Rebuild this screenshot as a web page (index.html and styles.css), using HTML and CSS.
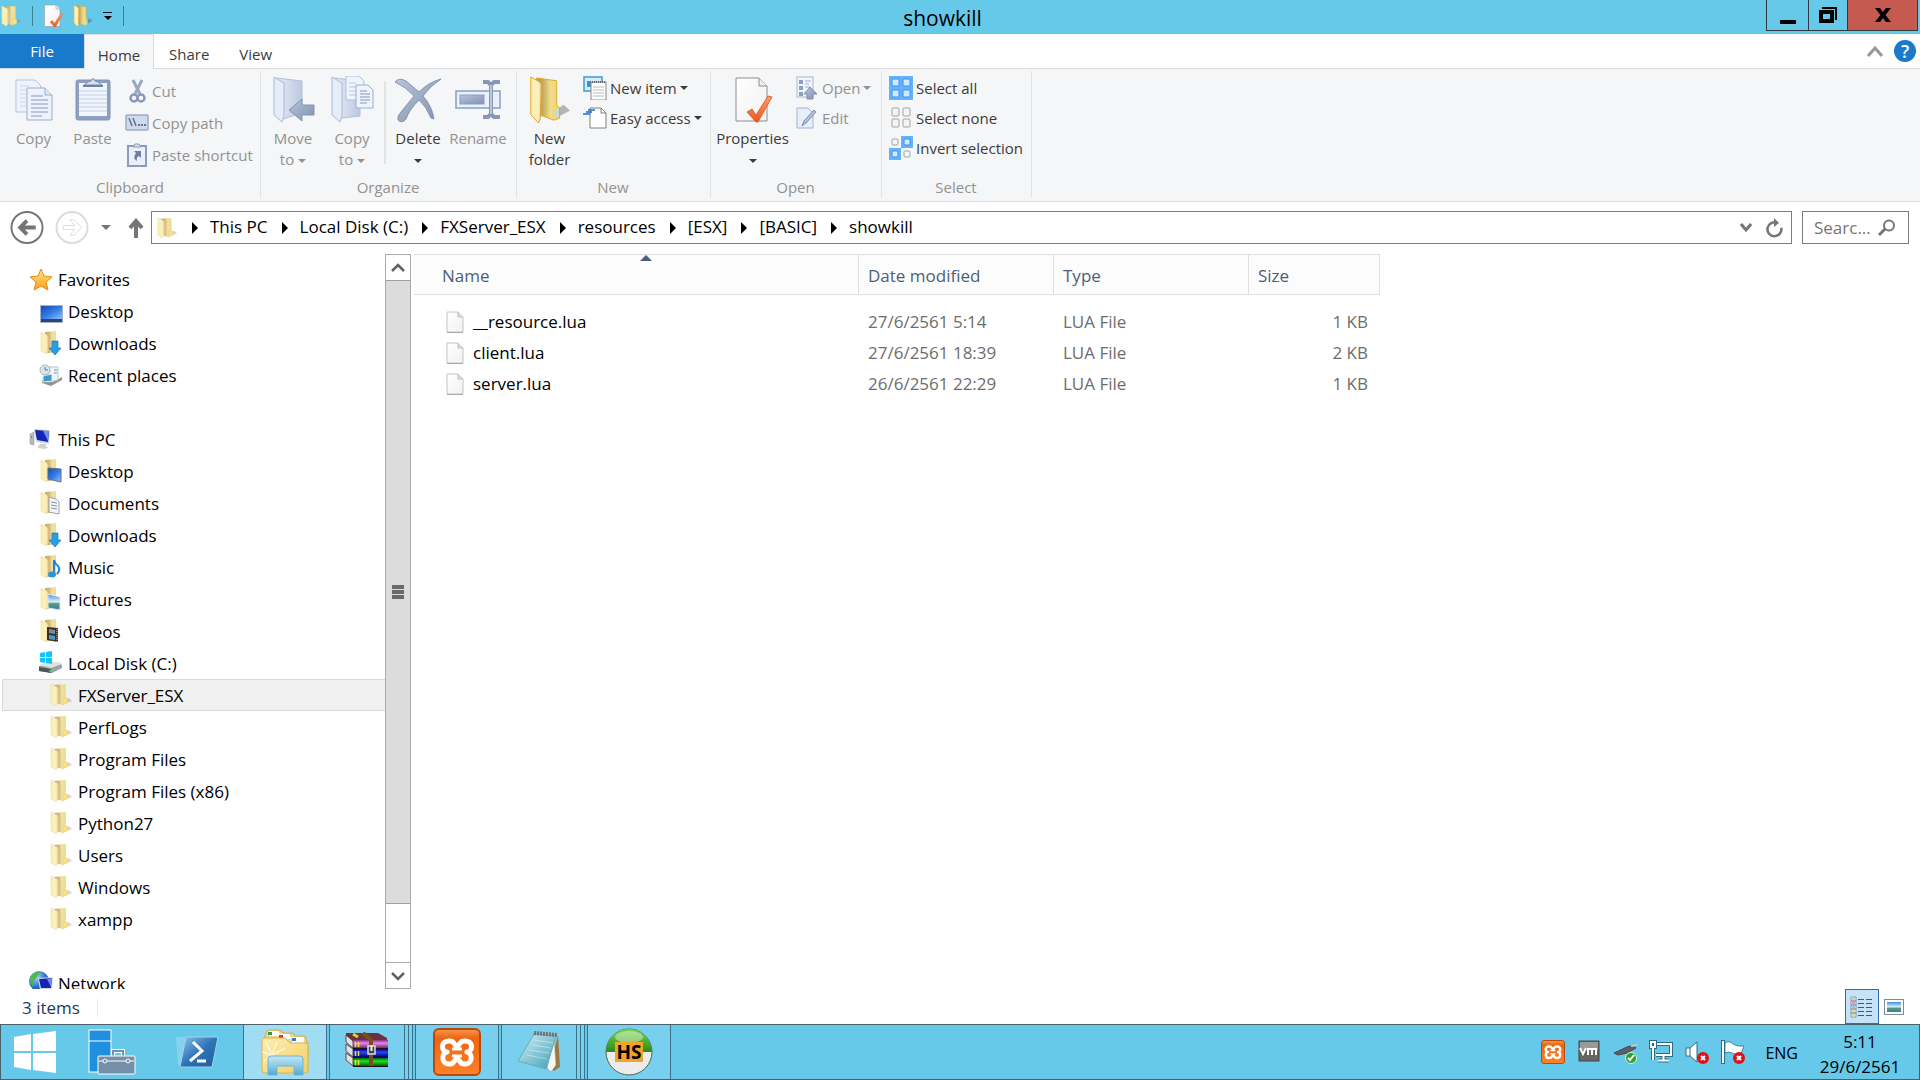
FILE: index.html
```html
<!DOCTYPE html>
<html lang="en">
<head>
<meta charset="utf-8">
<title>showkill</title>
<link rel="stylesheet" href="styles.css">
</head>
<body>
<svg class="defs" width="0" height="0" aria-hidden="true">
  <defs>
    <linearGradient id="gFront" x1="0" x2="1"><stop offset="0" stop-color="#fcefb0"/><stop offset=".7" stop-color="#fbf0c0"/><stop offset="1" stop-color="#ead28a"/></linearGradient>
    <linearGradient id="gBack" x1="0" x2="1"><stop offset="0" stop-color="#b9974a"/><stop offset=".3" stop-color="#c9ad60"/><stop offset=".6" stop-color="#efdc8e"/><stop offset="1" stop-color="#f0d566"/></linearGradient>
    <linearGradient id="gBackPale" x1="0" x2="1"><stop offset="0" stop-color="#c5a868"/><stop offset=".35" stop-color="#d0b87c"/><stop offset=".6" stop-color="#f0e0a4"/><stop offset="1" stop-color="#f1da80"/></linearGradient>
    <linearGradient id="gBlueFold" x1="0" x2="1"><stop offset="0" stop-color="#e6ecf8"/><stop offset="1" stop-color="#bcc8de"/></linearGradient>
    <linearGradient id="gSteel" x1="0" y1="0" x2="1" y2="1"><stop offset="0" stop-color="#bac5d8"/><stop offset="1" stop-color="#7f91b1"/></linearGradient>
    <linearGradient id="gScreen" x1="0" y1="0" x2="1" y2="1"><stop offset="0" stop-color="#1d49ad"/><stop offset=".5" stop-color="#2f7be6"/><stop offset="1" stop-color="#8fc0fb"/></linearGradient>
    <linearGradient id="gStar" x1="0" y1="0" x2="0" y2="1"><stop offset="0" stop-color="#ffe680"/><stop offset="1" stop-color="#ff9d1e"/></linearGradient>
    <linearGradient id="gCheck" x1="0" y1="0" x2="0" y2="1"><stop offset="0" stop-color="#f8a070"/><stop offset="1" stop-color="#e8571d"/></linearGradient>
    <linearGradient id="gPage" x1="0" y1="0" x2="1" y2="1"><stop offset="0" stop-color="#ffffff"/><stop offset="1" stop-color="#f1f1f1"/></linearGradient>
    <linearGradient id="gPs" x1="0" y1="0" x2="1" y2="1"><stop offset="0" stop-color="#8cc4ea"/><stop offset=".5" stop-color="#2f74b8"/><stop offset="1" stop-color="#1d5c9e"/></linearGradient>
    <linearGradient id="gNote" x1="0" y1="0" x2="1" y2="1"><stop offset="0" stop-color="#d3f0f6"/><stop offset="1" stop-color="#3f9fb8"/></linearGradient>
    <linearGradient id="gSky" x1="0" y1="0" x2="0" y2="1"><stop offset="0" stop-color="#3f8fdc"/><stop offset=".5" stop-color="#dff2fb"/><stop offset=".6" stop-color="#5f9a74"/><stop offset="1" stop-color="#357abc"/></linearGradient>
    <linearGradient id="gManila" x1="0" y1="0" x2="1" y2="1"><stop offset="0" stop-color="#fbeeb4"/><stop offset="1" stop-color="#f3cf62"/></linearGradient>
    <linearGradient id="gStand" x1="0" y1="0" x2="0" y2="1"><stop offset="0" stop-color="#c3e6f3"/><stop offset=".5" stop-color="#8fcbe6"/><stop offset="1" stop-color="#4fa7d6"/></linearGradient>
    <radialGradient id="gGlobe" cx=".35" cy=".3" r=".8"><stop offset="0" stop-color="#a8d8ff"/><stop offset=".6" stop-color="#2a71cf"/><stop offset="1" stop-color="#0a3a8c"/></radialGradient>
    <linearGradient id="gOrange" x1="0" y1="0" x2="0" y2="1"><stop offset="0" stop-color="#f59a52"/><stop offset=".2" stop-color="#ee6511"/><stop offset="1" stop-color="#ff8128"/></linearGradient>
    <linearGradient id="gGreen" x1="0" y1="0" x2="0" y2="1"><stop offset="0" stop-color="#79d84a"/><stop offset="1" stop-color="#2c8a1c"/></linearGradient>
    <linearGradient id="gPurple" x1="0" y1="0" x2="0" y2="1"><stop offset="0" stop-color="#8c2f84"/><stop offset=".4" stop-color="#e58be0"/><stop offset="1" stop-color="#7a2272"/></linearGradient>
    <linearGradient id="gBlue" x1="0" y1="0" x2="0" y2="1"><stop offset="0" stop-color="#00008c"/><stop offset=".4" stop-color="#2b45f5"/><stop offset="1" stop-color="#000070"/></linearGradient>
    <linearGradient id="gLime" x1="0" y1="0" x2="0" y2="1"><stop offset="0" stop-color="#006e00"/><stop offset=".4" stop-color="#1fe01f"/><stop offset="1" stop-color="#006000"/></linearGradient>
  </defs>
  <symbol id="folder" viewBox="0 0 24 24">
    <path d="M12 22L23 18L20 15L15 17Z" fill="#777" opacity=".3"/>
    <path d="M5 2L16 1L17 2V15L18 15.500V20L14 22L7 20Z" fill="url(#gBackPale)"/>
    <path d="M2 1L8 4L9 6V20L7 23L2 20Z" fill="url(#gFront)" stroke="#ecd795" stroke-width=".5"/>
    <path d="M14 15.500H18V20L14 21.500Z" fill="#f7e48a" stroke="#e8cc6a" stroke-width=".5"/>
  </symbol>
  <symbol id="folder-plain" viewBox="0 0 24 24">
    <path d="M6 1L17 0V17L18 20L14 22H7Z" fill="url(#gBackPale)"/>
    <path d="M2 1L8 4L9 6V20L7 23L2 20Z" fill="url(#gFront)" stroke="#ecd795" stroke-width=".5"/>
  </symbol>
  <symbol id="down" viewBox="0 0 24 24"><path d="M13 10H19V17H22L16 24L10 17H13Z" fill="#2a9fe0" stroke="#1577b5" stroke-width=".7"/></symbol>
  <symbol id="caret" viewBox="0 0 8 4"><path d="M0 0H8L4 4Z" fill="currentColor"/></symbol>
  <symbol id="arrow-r" viewBox="0 0 6 12"><path d="M0 0L6 6L0 12Z" fill="currentColor"/></symbol>
  <symbol id="xampp" viewBox="0 0 48 48">
    <rect x="1" y="1" width="46" height="46" rx="5" fill="url(#gOrange)" stroke="#b9480d" stroke-width="2"/>
    <path d="M17 13C7 12 8 24 14 24C8 25 8 37 17 36C22 36 21 31 24 31C27 31 26 36 31 36C40 37 40 25 34 24C40 24 41 12 31 13C26 13 27 18 24 18C21 18 22 13 17 13Z" fill="none" stroke="#fff" stroke-width="5" stroke-linejoin="round"/>
    <path d="M19 21H29M19 28H29" stroke="#fff" stroke-width="3"/>
  </symbol>
  <symbol id="file" viewBox="0 0 18 22">
    <path d="M1 1H12L17 6V21H1Z" fill="url(#gPage)" stroke="#c4c4c4"/><path d="M12 1V6H17" fill="#ddd" stroke="#bdbdbd"/><path d="M1 21.500H17" stroke="#aaa"/>
  </symbol>
  <symbol id="props" viewBox="0 0 40 48">
    <path d="M3 2H26L34 10V45H3Z" fill="url(#gPage)" stroke="#8c8c8c"/><path d="M26 2V10H34" fill="#eee" stroke="#8c8c8c"/>
    <path d="M14 36L19 33L23 39L35 20L39 21L25 46H23Z" fill="url(#gCheck)" stroke="#e0531c" stroke-width=".8"/>
  </symbol>
  <symbol id="newfolder" viewBox="0 0 44 50">
    <path d="M24 46L43 36L36 30L28 36Z" fill="#555" opacity=".4"/>
    <path d="M8 2L29 5V31L32 33V44L26 46L10 40Z" fill="url(#gBack)" stroke="#e0a91e"/>
    <path d="M2 1L11 6L13 9L12 44L10 49L2 40Z" fill="url(#gFront)" stroke="#d9a227"/>
    <path d="M28 35H31V42L28 44Z" fill="#b8dcff"/>
  </symbol>
  <symbol id="redx" viewBox="0 0 12 12"><circle cx="6" cy="6" r="6" fill="#d9151b"/><path d="M4 4L8 8M8 4L4 8" stroke="#fff" stroke-width="2"/></symbol>
</svg>

<header class="titlebar">
  <div class="quick">
    <svg width="22" height="24"><use href="#folder"/></svg>
    <span class="qsep"></span>
    <button aria-label="Properties"><svg width="20" height="24"><use href="#props"/></svg></button>
    <button aria-label="New folder"><svg width="20" height="24"><use href="#newfolder"/></svg></button>
    <button aria-label="Customize toolbar"><svg width="10" height="8" viewBox="0 0 10 8"><path d="M0 0H9V1H0ZM1 4H9L5 8Z"/></svg></button>
    <span class="qsep"></span>
  </div>
  <h1 class="title">showkill</h1>
  <div class="winbtns">
    <button class="min" aria-label="Minimize"><svg width="16" height="14" viewBox="0 0 16 14"><path d="M0 10H16V14H0Z"/></svg></button>
    <button class="max" aria-label="Restore"><svg width="18" height="16" viewBox="0 0 18 16"><path d="M3 0H18V13H16V2H3ZM0 3H15V16H0ZM4 7V12H11V7Z" fill-rule="evenodd"/></svg></button>
    <button class="close" aria-label="Close"><svg width="16" height="14" viewBox="0 0 16 14"><path d="M0 0H5L8 4L11 0H16L10.500 7L16 14H11L8 10L5 14H0L5.500 7Z"/></svg></button>
  </div>
</header>

<nav class="tabs" aria-label="Ribbon tabs">
  <button class="tab file">File</button>
  <button class="tab home">Home</button>
  <button class="tab">Share</button>
  <button class="tab">View</button>
  <span class="grow"></span>
  <button class="plain" aria-label="Collapse ribbon"><svg width="16" height="12" viewBox="0 0 16 12"><path d="M1 11L8 3L15 11" fill="none" stroke="#999" stroke-width="3"/></svg></button>
  <button class="help" aria-label="Help">?</button>
</nav>

<section class="ribbon" aria-label="Home ribbon">
  <div class="group g-clip">
    <div class="tools">
      <button class="big off"><svg width="38" height="48" viewBox="0 0 38 48"><g stroke="#b5c3dc" fill="#edf3fd"><path d="M1 4H20L26 10V36H1Z"/><path d="M12 12H30L37 19V44H12Z" stroke="#9badcb"/></g><path d="M30 12V19H37" fill="#dde7f7" stroke="#9badcb"/><path d="M5 10H14M5 14H11M5 18H11M5 22H11M5 26H11M5 30H11" stroke="#cbd6e8"/><path d="M16 20H28M16 24H33M16 28H33M16 32H33M16 36H33M16 40H27" stroke="#8497b8"/></svg><span>Copy</span></button>
      <button class="big off"><svg width="38" height="48" viewBox="0 0 38 48"><rect x="2" y="4" width="34" height="40" rx="2" fill="#8ea0c0" stroke="#8496b5"/><rect x="5" y="7" width="28" height="33" fill="#f0f5fe"/><path d="M5 15H33M5 19H33M5 23H33M5 27H33M5 31H33M5 35H33" stroke="#c3cfe3"/><path d="M10 9L14 6L17 5Q19 0 21 5L24 6L28 9Z" fill="#d7e0ee" stroke="#7c8eae"/><path d="M9 10H29" stroke="#71829f" stroke-width="2"/></svg><span>Paste</span></button>
      <div class="list roomy">
        <button class="small off"><svg width="24" height="24" viewBox="0 0 24 24"><path d="M8 1L15 15M17 1L10 15" stroke="#98a8c4" stroke-width="3"/><circle cx="9" cy="19" r="3.500" fill="none" stroke="#8799ba" stroke-width="2.500"/><circle cx="16" cy="19" r="3.500" fill="none" stroke="#8799ba" stroke-width="2.500"/></svg>Cut</button>
        <button class="small off"><svg width="24" height="24" viewBox="0 0 24 24"><rect x="1" y="4" width="22" height="15" rx="1" fill="#cfdaec" stroke="#9babc8" stroke-width="1.500"/><path d="M4 7L7 15M8 7L11 15" stroke="#5f7396" stroke-width="1.500"/><path d="M13 14H15M16 14H18M19 14H21" stroke="#5f7396" stroke-width="2"/></svg>Copy path</button>
        <button class="small off"><svg width="24" height="24" viewBox="0 0 24 24"><rect x="3" y="3" width="18" height="20" fill="#e9f0fc" stroke="#8b9dbe" stroke-width="2"/><path d="M8 4L10 1H14L16 4Z" fill="#d7e0ee" stroke="#8b9dbe"/><path d="M9 8H16V15L14 13Q11 14 12 18Q7 15 11 10Z" fill="#6c80a5"/></svg>Paste shortcut</button>
      </div>
    </div>
    <div class="caption">Clipboard</div>
  </div>
  <div class="group g-org">
    <div class="tools">
      <button class="big off"><svg width="44" height="48" viewBox="0 0 44 48"><path d="M5 2L31 5V37L12 43Z" fill="url(#gBlueFold)" stroke="#b3c0d8"/><path d="M3 1L13 7V40L11 46L3 39Z" fill="#e5edf9" stroke="#aab9d4"/><path d="M18 34L31 23V29H43V39H31V45Z" fill="url(#gSteel)" stroke="#8294b3"/></svg><span>Move<br>to <svg class="cr" width="8" height="4"><use href="#caret"/></svg></span></button>
      <button class="big off"><svg width="44" height="48" viewBox="0 0 44 48"><path d="M5 2L30 5V40L12 42Z" fill="url(#gBlueFold)" stroke="#b3c0d8"/><path d="M2 1L12 7V40L10 46L2 39Z" fill="#e5edf9" stroke="#aab9d4"/><path d="M16 0H29L34 5V24H16Z" fill="#eef4fe" stroke="#b2c0d9"/><path d="M19 7H26M19 11H26M19 15H26M19 19H26" stroke="#bac7dd"/><path d="M26 9H38L43 14V32H26Z" fill="#eef4fe" stroke="#9badcb"/><path d="M30 15H37M30 18H40M30 21H40M30 24H40M30 27H37" stroke="#8295b7"/></svg><span>Copy<br>to <svg class="cr" width="8" height="4"><use href="#caret"/></svg></span></button>
      <span class="tsep"></span>
      <button class="big"><svg width="48" height="48" viewBox="0 0 48 48"><path d="M1 6Q5 1 12 5L25 16Q35 6 47 3Q36 10 29 20Q38 30 40 43L37 42Q32 30 25 24Q15 34 12 43Q8 48 4 44Q3 40 7 36L20 20Q12 11 1 6Z" fill="url(#gSteel)" stroke="#8395b4"/></svg><span>Delete<br><svg class="cr" width="8" height="4"><use href="#caret"/></svg></span></button>
      <button class="big off"><svg width="46" height="48" viewBox="0 0 46 48"><rect x="1" y="15" width="44" height="17" fill="#eaf1fe" stroke="#8b9dbe" stroke-width="1.500"/><rect x="5" y="19" width="24" height="9" fill="url(#gSteel)" stroke="#8b9dbe"/><path d="M28 6H33L36 9L39 6H45M28 41H33L36 38L39 41H45M36 8V39" fill="none" stroke="#8698b6" stroke-width="4"/><path d="M36 9V38" stroke="#b9c6db" stroke-width="2"/></svg><span>Rename</span></button>
    </div>
    <div class="caption">Organize</div>
  </div>
  <div class="group g-new">
    <div class="tools">
      <button class="big"><svg width="44" height="48"><use href="#newfolder"/></svg><span>New<br>folder</span></button>
      <div class="list">
        <button class="small"><svg width="24" height="24" viewBox="0 0 24 24"><rect x="1" y="1" width="18" height="14" fill="#d5ecfa" stroke="#3f9bd4" stroke-width="1.500"/><path d="M4 5H8V11H4Z" fill="#3f8fca"/><rect x="8" y="6" width="15" height="18" fill="#fff" stroke="#868686"/><path d="M9 6H23" stroke="#666" stroke-width="2" stroke-dasharray="1 1"/><path d="M10 11H21M10 14H21M10 17H21M10 20H21" stroke="#b5bcc4"/></svg>New item <svg class="cr" width="8" height="4"><use href="#caret"/></svg></button>
        <button class="small"><svg width="24" height="24" viewBox="0 0 24 24"><path d="M7 2H18L23 7V22H7Z" fill="#fff" stroke="#808080"/><path d="M18 2V7H23" fill="none" stroke="#808080"/><path d="M5 4H12M3 6H9M0 8H7" stroke="#1d6fd6" stroke-width="1.500"/></svg>Easy access <svg class="cr" width="8" height="4"><use href="#caret"/></svg></button>
      </div>
    </div>
    <div class="caption">New</div>
  </div>
  <div class="group g-open">
    <div class="tools">
      <button class="big wide"><svg width="40" height="48"><use href="#props"/></svg><span>Properties<br><svg class="cr" width="8" height="4"><use href="#caret"/></svg></span></button>
      <div class="list">
        <button class="small off"><svg width="24" height="24" viewBox="0 0 24 24"><rect x="2" y="1" width="16" height="20" fill="#f2f6fd" stroke="#a7b6d0"/><path d="M4 4H8V8H4ZM4 10H8V14H4ZM4 16H8V20H4Z" fill="#8d9fbf"/><path d="M10 5H16M10 8H14M10 11H15" stroke="#9badcb"/><path d="M15 11L22 18H18V23H12V18H9Z" fill="url(#gSteel)" stroke="#7f91b0"/></svg>Open <svg class="cr" width="8" height="4"><use href="#caret"/></svg></button>
        <button class="small off"><svg width="24" height="24" viewBox="0 0 24 24"><path d="M2 2H13L18 7V22H2Z" fill="#e6effc" stroke="#a2b2cf"/><path d="M7 20L9 15L19 4L21 6L11 17Z" fill="#b5c3da" stroke="#7c8eae"/></svg>Edit</button>
      </div>
    </div>
    <div class="caption">Open</div>
  </div>
  <div class="group g-sel">
    <div class="tools">
      <div class="list">
        <button class="small"><svg width="24" height="24" viewBox="0 0 24 24"><path d="M0 0H24V24H0Z" fill="#62b2ff"/><g fill="#cfeaff" stroke="#3d93e6"><rect x="3" y="3" width="7" height="7" rx="1"/><rect x="14" y="3" width="7" height="7" rx="1"/><rect x="3" y="14" width="7" height="7" rx="1"/><rect x="14" y="14" width="7" height="7" rx="1"/></g></svg>Select all</button>
        <button class="small"><svg width="24" height="24" viewBox="0 0 24 24"><g fill="#f4f4f4" stroke="#a3a3a3"><rect x="3" y="2" width="7" height="8" rx="1"/><rect x="14" y="2" width="7" height="8" rx="1"/><rect x="3" y="13" width="7" height="8" rx="1"/><rect x="14" y="13" width="7" height="8" rx="1"/></g></svg>Select none</button>
        <button class="small"><svg width="24" height="24" viewBox="0 0 24 24"><path d="M12 0H24V12H12ZM0 12H12V24H0Z" fill="#62b2ff"/><g fill="#f4f4f4" stroke="#a3a3a3"><rect x="3" y="3" width="6" height="6" rx="1"/><rect x="15" y="15" width="6" height="6" rx="1"/></g><g fill="#cfeaff" stroke="#3d93e6"><rect x="15" y="3" width="6" height="6" rx="1"/><rect x="3" y="15" width="6" height="6" rx="1"/></g></svg>Invert selection</button>
      </div>
    </div>
    <div class="caption">Select</div>
  </div>
</section>

<div class="addressrow">
  <button class="plain" aria-label="Back"><svg width="34" height="33" viewBox="0 0 34 34"><circle cx="17" cy="17" r="16" fill="none" stroke="#757575" stroke-width="2"/><path d="M26 17H11M17 10L10 17L17 24" fill="none" stroke="#757575" stroke-width="4"/></svg></button>
  <button class="plain fwd" aria-label="Forward"><svg width="34" height="33" viewBox="0 0 34 34"><circle cx="17" cy="17" r="16" fill="none" stroke="#dcdcdc" stroke-width="2"/><path d="M8 15H20L15 9H19L27 17L19 25H15L20 19H8Z" fill="none" stroke="#dcdcdc"/></svg></button>
  <button class="plain hist" aria-label="Recent locations"><svg width="10" height="5"><use href="#caret"/></svg></button>
  <button class="plain up" aria-label="Up"><svg width="16" height="20" viewBox="0 0 16 20"><path d="M8 20V3M2 10L8 3L14 10" fill="none" stroke="#757575" stroke-width="4"/></svg></button>
  <div class="address">
    <svg width="22" height="24"><use href="#folder"/></svg>
    <nav class="crumbs" aria-label="Path">
      <svg width="6" height="12"><use href="#arrow-r"/></svg><a href="#">This PC</a>
      <svg width="6" height="12"><use href="#arrow-r"/></svg><a href="#">Local Disk (C:)</a>
      <svg width="6" height="12"><use href="#arrow-r"/></svg><a href="#">FXServer_ESX</a>
      <svg width="6" height="12"><use href="#arrow-r"/></svg><a href="#">resources</a>
      <svg width="6" height="12"><use href="#arrow-r"/></svg><a href="#">[ESX]</a>
      <svg width="6" height="12"><use href="#arrow-r"/></svg><a href="#">[BASIC]</a>
      <svg width="6" height="12"><use href="#arrow-r"/></svg><a href="#">showkill</a>
    </nav>
    <button class="plain" aria-label="Previous locations"><svg width="12" height="10" viewBox="0 0 12 10"><path d="M1 1L6 7L11 1" fill="none" stroke="#757575" stroke-width="3"/></svg></button>
    <button class="plain" aria-label="Refresh"><svg width="18" height="20" viewBox="0 0 18 20"><path d="M14 7A7 7 0 1 1 8 4.500" fill="none" stroke="#757575" stroke-width="2.500" transform="rotate(28 9 11)"/><path d="M8 0L13 5L8 9Z" fill="#757575"/></svg></button>
  </div>
  <label class="search"><input type="text" aria-label="Search showkill" placeholder="Searc..."><svg width="18" height="18" viewBox="0 0 18 18"><circle cx="11" cy="6.500" r="5" fill="none" stroke="#757575" stroke-width="2"/><path d="M7 10L1 16" stroke="#757575" stroke-width="3"/></svg></label>
</div>

<main class="main">
  <nav class="tree" aria-label="Navigation pane">
    <a class="l0" href="#"><svg width="24" height="24" viewBox="0 0 24 24"><path d="M12 2L15 9L23 10L17 15L19 23L12 19L5 23L7 15L1 10L9 9Z" fill="url(#gStar)" stroke="#e98a17"/></svg>Favorites</a>
    <a class="l1" href="#"><svg width="24" height="24" viewBox="0 0 24 24"><path d="M1 6H24V24H1Z" fill="#9db4d4"/><path d="M2 7H23V20H2Z" fill="url(#gScreen)"/><path d="M2 20H23V23H2Z" fill="#2f4468"/></svg>Desktop</a>
    <a class="l1" href="#"><svg width="24" height="24" viewBox="0 0 24 24"><use href="#folder-plain"/><use href="#down"/></svg>Downloads</a>
    <a class="l1" href="#"><svg width="24" height="24" viewBox="0 0 24 24"><path d="M3 20L12 23L23 17V14L14 19L3 17Z" fill="#8d9496"/><path d="M9 4H19V17L9 19Z" fill="#f2f5f7" stroke="#b9c3c9"/><path d="M4 13L13 11V18L4 19Z" fill="#3c9bc9" stroke="#dfe9ee"/><path d="M15 7H18M15 10H18" stroke="#5c8fb8"/><circle cx="6" cy="7" r="5" fill="#d8e6ee" stroke="#9fb3bf"/><path d="M6 4V7H9" fill="none" stroke="#5d7280"/></svg>Recent places</a>
    <span class="gap"></span>
    <a class="l0" href="#"><svg width="24" height="24" viewBox="0 0 24 24"><path d="M1 7L5 5V18L1 17Z" fill="#b4bac1" stroke="#8a9199" stroke-width=".5"/><path d="M2 9H3V11H2Z" fill="#2cb82c"/><path d="M11 17H17V20H20L16 22L8 21Z" fill="#cfd3d8"/><path d="M5 2L21 3L20 17L7 15Z" fill="#d4d8de"/><path d="M6 3L20 4L19 15L8 13Z" fill="#1523b4"/><path d="M14 4L20 4L19 14Z" fill="#6f8cf0"/></svg>This PC</a>
    <a class="l1" href="#"><svg width="24" height="24" viewBox="0 0 24 24"><use href="#folder-plain"/><path d="M9 9L22 10V23L9 20Z" fill="url(#gScreen)" stroke="#5b6f8e"/></svg>Desktop</a>
    <a class="l1" href="#"><svg width="24" height="24" viewBox="0 0 24 24"><use href="#folder-plain"/><path d="M10 6L17 8L20 11V23L10 21Z" fill="#f6f7f9" stroke="#9ea3a8"/><path d="M12 11L18 12M12 14L18 15M12 17L18 18" stroke="#7f93a8"/></svg>Documents</a>
    <a class="l1" href="#"><svg width="24" height="24" viewBox="0 0 24 24"><use href="#folder-plain"/><use href="#down"/></svg>Downloads</a>
    <a class="l1" href="#"><svg width="24" height="24" viewBox="0 0 24 24"><use href="#folder-plain"/><path d="M15 5Q16 9 19 11Q22 15 18 19" fill="none" stroke="#1f86cf" stroke-width="2"/><path d="M15 5V19" stroke="#1f86cf" stroke-width="2"/><ellipse cx="13" cy="19.500" rx="4" ry="3" fill="#2a93da"/></svg>Music</a>
    <a class="l1" href="#"><svg width="24" height="24" viewBox="0 0 24 24"><use href="#folder-plain"/><path d="M9 7L21 10V23L9 21Z" fill="url(#gSky)" stroke="#e8eef2"/></svg>Pictures</a>
    <a class="l1" href="#"><svg width="24" height="24" viewBox="0 0 24 24"><use href="#folder-plain"/><path d="M8 8L19 9V23L8 21Z" fill="#3c3026"/><path d="M10 10L16 11V15L10 14ZM10 16L16 17V21L10 20Z" fill="#4a9bd0"/><path d="M11 12L14 11V14ZM12 18L15 18V20Z" fill="#d8692a"/><path d="M18 10V23" stroke="#d8d8d8" stroke-dasharray="1 1"/></svg>Videos</a>
    <a class="l1" href="#"><svg width="24" height="24" viewBox="0 0 24 24"><path d="M0 15L10 12H20L23 14V17L13 22L0 20Z" fill="#9da2a5"/><path d="M0 14L12 17L23 13L20 11H9Z" fill="#dfe2e3"/><path d="M0 16L12 18V22L0 20Z" fill="#4b5659"/><path d="M10 19H12V21H10Z" fill="#35d435"/><path d="M1 2L6 1V6H1ZM7 1L13 0V6H7ZM1 7H6V12L1 11ZM7 7H13V13L7 12Z" fill="#12c4fb"/></svg>Local Disk (C:)</a>
    <a class="l2 sel" href="#"><svg width="24" height="24"><use href="#folder"/></svg>FXServer_ESX</a>
    <a class="l2" href="#"><svg width="24" height="24"><use href="#folder"/></svg>PerfLogs</a>
    <a class="l2" href="#"><svg width="24" height="24"><use href="#folder"/></svg>Program Files</a>
    <a class="l2" href="#"><svg width="24" height="24"><use href="#folder"/></svg>Program Files (x86)</a>
    <a class="l2" href="#"><svg width="24" height="24"><use href="#folder"/></svg>Python27</a>
    <a class="l2" href="#"><svg width="24" height="24"><use href="#folder"/></svg>Users</a>
    <a class="l2" href="#"><svg width="24" height="24"><use href="#folder"/></svg>Windows</a>
    <a class="l2" href="#"><svg width="24" height="24"><use href="#folder"/></svg>xampp</a>
    <span class="gap"></span>
    <a class="l0" href="#"><svg width="24" height="24" viewBox="0 0 24 24"><circle cx="10" cy="10" r="10" fill="url(#gGlobe)"/><path d="M2 5Q7 -1 11 1L8 6L4 11L5 16Q-1 11 2 5Z" fill="#4fb84a"/><path d="M9 7L24 6L23 18L11 19Z" fill="#d4d8de"/><path d="M10 8L23 7L22 17L12 17Z" fill="#1523b4"/><path d="M18 8L23 7L22 16Z" fill="#6f8cf0"/></svg>Network</a>
  </nav>
  <div class="scrollbar">
    <button aria-label="Scroll up"><svg width="14" height="10" viewBox="0 0 14 10"><path d="M1 8L7 2L13 8" fill="none" stroke="#606060" stroke-width="2.500"/></svg></button>
    <div class="track"><div class="thumb"><i></i><i></i><i></i></div></div>
    <button aria-label="Scroll down"><svg width="14" height="10" viewBox="0 0 14 10"><path d="M1 2L7 8L13 2" fill="none" stroke="#606060" stroke-width="2.500"/></svg></button>
  </div>
  <div class="files">
    <table>
      <colgroup><col class="c-name"><col class="c-date"><col class="c-type"><col class="c-size"></colgroup>
      <thead><tr>
        <th class="sorted">Name<svg class="sort" width="12" height="6" viewBox="0 0 12 6"><path d="M0 6L6 0L12 6Z" fill="#4c607a"/></svg></th>
        <th>Date modified</th><th>Type</th><th>Size</th>
      </tr></thead>
      <tbody>
        <tr><td><span class="fname"><svg width="18" height="22"><use href="#file"/></svg>__resource.lua</span></td><td>27/6/2561 5:14</td><td>LUA File</td><td>1 KB</td></tr>
        <tr><td><span class="fname"><svg width="18" height="22"><use href="#file"/></svg>client.lua</span></td><td>27/6/2561 18:39</td><td>LUA File</td><td>2 KB</td></tr>
        <tr><td><span class="fname"><svg width="18" height="22"><use href="#file"/></svg>server.lua</span></td><td>26/6/2561 22:29</td><td>LUA File</td><td>1 KB</td></tr>
      </tbody>
    </table>
  </div>
</main>

<div class="status">
  <span class="count">3 items</span>
  <span class="grow"></span>
  <button class="view on" aria-label="Details view"><svg width="24" height="22" viewBox="0 0 24 22"><g fill="#fff" stroke="#8795a5"><path d="M1 1H6V5H1ZM1 5H6V9H1ZM1 9H6V13H1ZM1 13H6V17H1ZM1 17H6V21H1Z"/></g><path d="M2 3H5" stroke="#999"/><path d="M2 7H5" stroke="#d33"/><path d="M2 11H5" stroke="#38c"/><path d="M2 15H5M2 19H5" stroke="#bb3"/><path d="M8 3.500H14M16 3.500H22M8 7.500H14M16 7.500H22M8 11.500H14M16 11.500H22M8 15.500H14M16 15.500H22M8 19.500H14M16 19.500H22" stroke="#44586f"/></svg></button>
  <button class="view" aria-label="Large icons view"><svg width="20" height="18" viewBox="0 0 20 18"><rect x=".5" y="1.500" width="19" height="15" fill="#fff" stroke="#7e8ea0"/><rect x="3" y="4" width="14" height="10" fill="url(#gSky)"/></svg></button>
</div>

<footer class="taskbar">
  <button class="pin start" aria-label="Start"><svg width="44" height="44" viewBox="0 0 44 44"><path d="M1 7L18 4V21H1ZM20 4L43 1V21H20ZM1 23H18V40L1 37ZM20 23H43V43L20 40Z" fill="#fff"/></svg></button>
  <button class="pin srv" aria-label="Server Manager"><svg width="48" height="46" viewBox="0 0 48 46"><rect x="1" y="1" width="22" height="42" fill="#1f8fdf" stroke="#fff"/><path d="M1 12H23" stroke="#fff"/><path d="M25 27V22H35V27" fill="none" stroke="#fff" stroke-width="4"/><path d="M25 27V22H35V27" fill="none" stroke="#7390a8" stroke-width="2"/><rect x="10" y="27" width="37" height="18" rx="1" fill="#7390a8" stroke="#fff"/><path d="M11 32H46" stroke="#fff"/><circle cx="17" cy="32" r="2" fill="#7390a8" stroke="#fff"/><circle cx="40" cy="32" r="2" fill="#7390a8" stroke="#fff"/></svg></button>
  <button class="pin ps" aria-label="PowerShell"><svg width="44" height="34" viewBox="0 0 44 34"><path d="M0 2H12L8 30H2Z" fill="#fff" opacity=".2"/><path d="M10 2H42L36 32H4Z" fill="url(#gPs)" stroke="#a5cfea"/><path d="M17 7L26 16L14 26" fill="none" stroke="#fff" stroke-width="3"/><path d="M21 26H30" stroke="#fff" stroke-width="3"/></svg></button>
  <button class="task on" aria-label="File Explorer"><svg width="48" height="48" viewBox="0 0 48 48"><path d="M2 16L5 4Q6 2 8 2H18Q21 2 22 5H31Q33 5 34 8H43Q45 8 45 11L47 18V30H2Z" fill="#ecd58b" stroke="#d3ab50"/><path d="M8 3H17L20 8H8ZM19 6H28L31 11H19ZM31 9H43V15H31Z" fill="#fff"/><path d="M7 4H11V7H7Z" fill="#2e9d3c"/><path d="M18 7H22V10H18Z" fill="#dd3527"/><path d="M31 10H35V13H31Z" fill="#2a82ca"/><path d="M1 12Q1 10 3 10H24L29 15H45Q47 15 47 17V43Q47 45 45 45H4Q1 45 1 42Z" fill="url(#gManila)" stroke="#d9b150"/><path d="M11 27L5 14M11 27L1 24M11 27L16 14M11 27L24 20M11 27L2 34" stroke="#fff" stroke-width="1.500" opacity=".6"/><path d="M7 47V31Q7 28 10 28H39Q42 28 42 31V47H33V39Q33 38 32 38H17Q16 38 16 39V47Z" fill="url(#gStand)" stroke="#6bb5d8"/></svg></button>
  <button class="task stack" aria-label="WinRAR"><svg width="44" height="38" viewBox="0 0 44 38"><path d="M1 1H33L42 6V10H8L1 4Z" fill="#6b3042"/><path d="M8 8H43V16H8Z" fill="url(#gPurple)"/><path d="M8 17H43V25H8Z" fill="url(#gBlue)"/><path d="M8 26H43V34H8Z" fill="url(#gLime)"/><path d="M1 3L8 9V16L1 10ZM1 12L8 17V25L1 19ZM1 21L8 26V34L1 28Z" fill="#e4e0e0" stroke="#3a2a35" stroke-width=".8"/><path d="M8 16.500H43M8 25.500H43M8 34.500H43" stroke="#1a1020"/><path d="M8 2L13 5" stroke="#e0cf2a" stroke-width="3"/><path d="M10.500 10V15M13.500 10V15M10.500 19V24M13.500 19V24M10.500 28V33M13.500 28V33" stroke="#f3e03b" stroke-width="1.500"/><path d="M18 1L26 8V34" stroke="#7b4c1f" stroke-width="4" fill="none"/><rect x="23" y="14" width="7" height="8" fill="#444" stroke="#ddd" stroke-width="1.500"/><path d="M26.500 13V19" stroke="#eee" stroke-width="2"/></svg></button>
  <button class="task" aria-label="XAMPP"><svg width="48" height="48"><use href="#xampp"/></svg></button>
  <button class="task stack" aria-label="Notepad"><svg width="46" height="44" viewBox="0 0 46 44"><path d="M42 6L44 38L38 42L34 38Z" fill="#9a7a3e"/><path d="M38 6L40 36L35 43L31 39Z" fill="#f5f7f7" stroke="#888" stroke-width=".5"/><path d="M18 5L40 7L30 40L2 32Z" fill="url(#gNote)" stroke="#6ea9b8"/><path d="M18 11L37 14M16 16L35 19M13 21L33 24M11 26L31 30" stroke="#fff" opacity=".4"/><path d="M18 4L41 6" stroke="#75706a" stroke-width="4" stroke-dasharray="2 1"/></svg></button>
  <button class="task" aria-label="HeidiSQL"><svg width="48" height="48" viewBox="0 0 48 48"><ellipse cx="24" cy="24" rx="23" ry="23" fill="#ececec" stroke="#4c6a4c"/><path d="M1 24A23 23 0 0 1 47 24Z" fill="url(#gGreen)"/><ellipse cx="24" cy="9" rx="14" ry="6" fill="#fff" opacity=".4"/><rect x="10" y="14" width="28" height="20" fill="#f0a526"/><text x="24" y="31" class="hs" text-anchor="middle">HS</text></svg></button>
  <span class="grow"></span>
  <div class="tray">
    <svg width="24" height="24"><use href="#xampp"/></svg>
    <svg width="24" height="24" viewBox="0 0 24 24"><rect x="2" y="1" width="20" height="20" fill="#666" stroke="#444"/><path d="M3 2H21V10H3Z" fill="#999"/><path d="M3 8L6 14L9 8M11 15V9H15V15M15 9H19V15" fill="none" stroke="#fff" stroke-width="2"/></svg>
    <svg width="24" height="24" viewBox="0 0 24 24"><path d="M1 13L14 7L21 5L23 8L14 13L5 15Z" fill="#5b6064" stroke="#43484b"/><path d="M18 6L24 5" stroke="#ccc" stroke-width="2"/><circle cx="18" cy="18" r="5.500" fill="#2f9e32" stroke="#d9f0d9"/><path d="M15 18L17 20L21 15" fill="none" stroke="#fff" stroke-width="2"/></svg>
    <svg width="24" height="24" viewBox="0 0 24 24"><g fill="none" stroke="#2d6c85" stroke-width="4"><path d="M8 4H22V15H7M14.500 15V20M9 20.500H20M4 7V20"/><path d="M2 2H6V7H2Z"/></g><g fill="none" stroke="#fff" stroke-width="2"><path d="M8 4H22V15H7M14.500 15V20M9 20.500H20M4 7V20"/><path d="M2 2H6V7H2Z"/></g></svg>
    <svg width="24" height="24" viewBox="0 0 24 24"><path d="M1 8H5L12 2V22L5 16H1Z" fill="#fff" stroke="#2d6c85"/><path d="M5 8V16" stroke="#2d6c85"/><svg x="12" y="12" width="12" height="12"><use href="#redx"/></svg></svg>
    <svg width="24" height="24" viewBox="0 0 24 24"><path d="M4 3Q8 0 12 4Q17 7 23 6L20 14Q15 16 11 13Q7 11 4 13Z" fill="#fff" stroke="#2d6c85" stroke-width=".8"/><path d="M2 0V24" stroke="#2d6c85" stroke-width="4"/><path d="M2 1V23" stroke="#fff" stroke-width="2"/><svg x="12" y="12" width="12" height="12"><use href="#redx"/></svg></svg>
  </div>
  <button class="lang">ENG</button>
  <time class="clock"><span>5:11</span><span>29/6/2561</span></time>
</footer>
</body>
</html>
```
FILE: styles.css
```css
* { box-sizing: border-box; }

body {
  margin: 0;
  height: 100vh;
  display: flex;
  flex-direction: column;
  overflow: hidden;
  background: #fff;
  color: #000;
  font: 17px/24px "Open Sans", "Noto Sans", sans-serif;
}

button {
  margin: 0;
  padding: 0;
  border: 0;
  background: none;
  color: inherit;
  font: inherit;
}

a { color: inherit; text-decoration: none; }
svg { flex: none; }
.defs { position: absolute; }
.grow { flex: 1; }
.plain { display: flex; align-items: center; justify-content: center; }

/* Title bar */
.titlebar {
  flex: none;
  height: 34px;
  display: flex;
  background: #66c9ea;
}
.quick {
  display: flex;
  align-items: center;
  gap: 10px;
  padding: 0 3px 2px 0;
}
.quick button { display: flex; }
.qsep { width: 1px; height: 20px; background: #3f7f95; }
.title {
  flex: 1;
  margin: 0;
  padding-right: 8px;
  text-align: center;
  font-size: 21px;
  font-weight: 400;
  line-height: 36px;
}
.winbtns { display: flex; height: 31px; margin-right: 2px; }
.winbtns button {
  display: flex;
  align-items: center;
  justify-content: center;
  border: 1px solid #2f3b40;
  border-top: 0;
  border-right: 0;
}
.winbtns .min { width: 42px; }
.winbtns .max { width: 39px; }
.winbtns .close { width: 71px; background: #c45a50; border-right: 1px solid #2f3b40; }
.min svg { margin-top: 4px; }

/* Ribbon tabs */
.tabs {
  flex: none;
  height: 35px;
  display: flex;
  border-bottom: 1px solid #dadbdc;
  font-size: 15px;
  color: #3b3b3b;
}
.tab { padding: 6px 15px 0; }
.tab.file { width: 84px; height: 34px; padding: 0; background: #1979ca; color: #fff; }
.tab.home {
  width: 70px;
  height: 35px;
  padding: 5px 0 0;
  background: #f5f6f7;
  border: 1px solid #dadbdc;
  border-bottom: 0;
}
.tabs .plain { margin-right: 11px; }
.help {
  align-self: center;
  width: 22px;
  height: 22px;
  margin-right: 4px;
  border-radius: 50%;
  background: #1979ca;
  color: #fff;
  font-size: 18px;
  font-weight: 600;
  line-height: 22px;
}

/* Ribbon */
.ribbon {
  flex: none;
  display: flex;
  padding: 2px 0 3px;
  background: #f5f6f7;
  border-bottom: 1px solid #dadbdc;
  font-size: 15px;
  line-height: 21px;
  color: #3b3b3b;
}
.group {
  display: flex;
  flex-direction: column;
  height: 127px;
  padding-left: 3px;
  border-right: 1px solid #e2e3e4;
}
.group.g-clip { width: 261px; padding-left: 4px; }
.g-org { width: 256px; }
.g-new { width: 194px; }
.g-open { width: 171px; }
.g-sel { width: 150px; }
.tools { flex: 1; display: flex; }
.caption { padding-right: 4px; line-height: 21px; text-align: center; color: #929292; }
.big {
  display: flex;
  flex-direction: column;
  align-items: center;
  gap: 4px;
  width: 59px;
  padding-top: 5px;
  white-space: nowrap;
}
.g-org .big { width: 60px; }
.g-org .big:first-child { width: 58px; }
.big.wide { width: 77px; }
.off { color: #929292; }
.cr { vertical-align: middle; }
.tsep { width: 2px; height: 83px; margin: 10px 2px 0; background: #e2e3e4; }
.list { display: flex; flex-direction: column; padding: 2px 0 0 4px; }
.small {
  display: flex;
  align-items: center;
  gap: 3px;
  height: 30px;
  white-space: nowrap;
}
.roomy { padding: 4px 0 0 3px; }
.roomy .small { height: 32px; }

/* Address row */
.addressrow {
  flex: none;
  display: flex;
  align-items: center;
  padding: 9px 11px 10px 10px;
}
.fwd { margin-left: 11px; }
.hist { width: 34px; color: #757575; }
.up { width: 25px; margin-right: 3px; }
.address {
  flex: 1;
  display: flex;
  align-items: center;
  height: 33px;
  padding: 0 7px 0 4px;
  border: 1px solid #7d7d7d;
}
.crumbs { flex: 1; display: flex; align-items: center; padding-bottom: 1px; }
.crumbs svg { margin: 1px 12px 0 14px; }
.address .plain { margin-left: 14px; }
.search {
  display: flex;
  align-items: center;
  width: 107px;
  height: 33px;
  margin-left: 10px;
  padding: 0 12px 0 11px;
  border: 1px solid #7d7d7d;
}
.search input {
  flex: 1;
  min-width: 0;
  padding: 0;
  border: 0;
  outline: 0;
  background: none;
  font: inherit;
}
.search input::placeholder { color: #757575; }

/* Navigation pane and file list */
.main { flex: 1; min-height: 0; display: flex; }
.tree {
  width: 385px;
  padding: 9px 0 0 2px;
  overflow: hidden;
}
.tree a {
  display: flex;
  align-items: center;
  gap: 5px;
  height: 32px;
  padding-top: 2px;
  border: 1px solid transparent;
}
.tree a svg { margin-bottom: 2px; }
.tree .l0 { padding-left: 26px; }
.tree .l1 { padding-left: 36px; }
.tree .l2 { padding-left: 46px; }
.tree .sel { background: #f0f0f0; border-color: #dadada; border-right: 0; }
.gap { display: block; height: 32px; }

.scrollbar {
  display: flex;
  flex-direction: column;
  width: 26px;
  border: 1px solid #ababab;
}
.scrollbar button {
  height: 25px;
  display: flex;
  align-items: center;
  justify-content: center;
}
.track {
  flex: 1;
  display: flex;
  flex-direction: column;
  padding-bottom: 58px;
  border-bottom: 1px solid #ababab;
}
.thumb {
  flex: 1;
  display: flex;
  flex-direction: column;
  align-items: center;
  justify-content: center;
  gap: 1px;
  border: solid #a0a0a0;
  border-width: 1px 0;
  background: #dcdcdc;
}
.thumb i { width: 12px; height: 4px; background: #6a6a6a; }

.files { flex: 1; padding-left: 3px; }
table { border-collapse: separate; border-spacing: 0; table-layout: fixed; width: 966px; }
.c-name { width: 445px; }
.c-date, .c-type { width: 195px; }
.c-size { width: 131px; }
th {
  height: 41px;
  padding: 2px 9px 0;
  border: solid #dfdfdf;
  border-width: 1px 1px 1px 0;
  background: #fcfcfc;
  color: #4c607a;
  font-weight: 400;
  text-align: left;
}
.sorted { position: relative; padding-left: 28px; }
.sort { position: absolute; top: 0; left: 51%; }
td { height: 31px; padding: 0 9px; color: #6d6d6d; }
tbody::before { content: ""; display: table-row; height: 11px; }
td:first-child { padding-left: 32px; color: #000; }
td:last-child { padding-right: 12px; text-align: right; }
.fname { display: flex; align-items: center; gap: 9px; }

/* Status bar */
.status {
  flex: none;
  display: flex;
  align-items: center;
  height: 35px;
  padding: 0 11px 0 22px;
  color: #1e395b;
}
.count { margin-top: 2px; padding-right: 17px; border-right: 1px solid #e6e6e6; line-height: 18px; }
.view { display: flex; align-items: center; justify-content: center; width: 30px; height: 35px; }
.view.on { width: 34px; border: 1px solid #2f6ea5; background: #c5e2f6; }

/* Taskbar */
.taskbar {
  flex: none;
  display: flex;
  height: 56px;
  border: 1px solid #4b626c;
  background: #66c9ea;
}
.taskbar button { display: flex; align-items: center; justify-content: center; }
.start { width: 68px; }
.taskbar .srv { width: 88px; padding-right: 2px; }
.ps { width: 86px; }
.taskbar .ps { padding-right: 4px; }
.task { width: 84px; margin-right: 2px; border: solid #3a7186; border-width: 0 1px; background: #78d0ee; }
.task.on { background: #a0dcf2; }
.taskbar .stack { padding: 0 8px 2px 0; box-shadow: inset -3px 0 #78d0ee, inset -4px 0 #3a7186, inset -7px 0 #78d0ee, inset -8px 0 #3a7186; }
.hs { font: 700 19px "Open Sans", sans-serif; }
.tray { display: flex; align-items: center; gap: 12px; }
.lang { margin: 2px 3px 0 20px; font-size: 16px; }
.clock {
  display: flex;
  flex-direction: column;
  justify-content: center;
  width: 118px;
  padding-top: 4px;
  font-size: 17px;
  line-height: 25px;
  text-align: center;
}
```
